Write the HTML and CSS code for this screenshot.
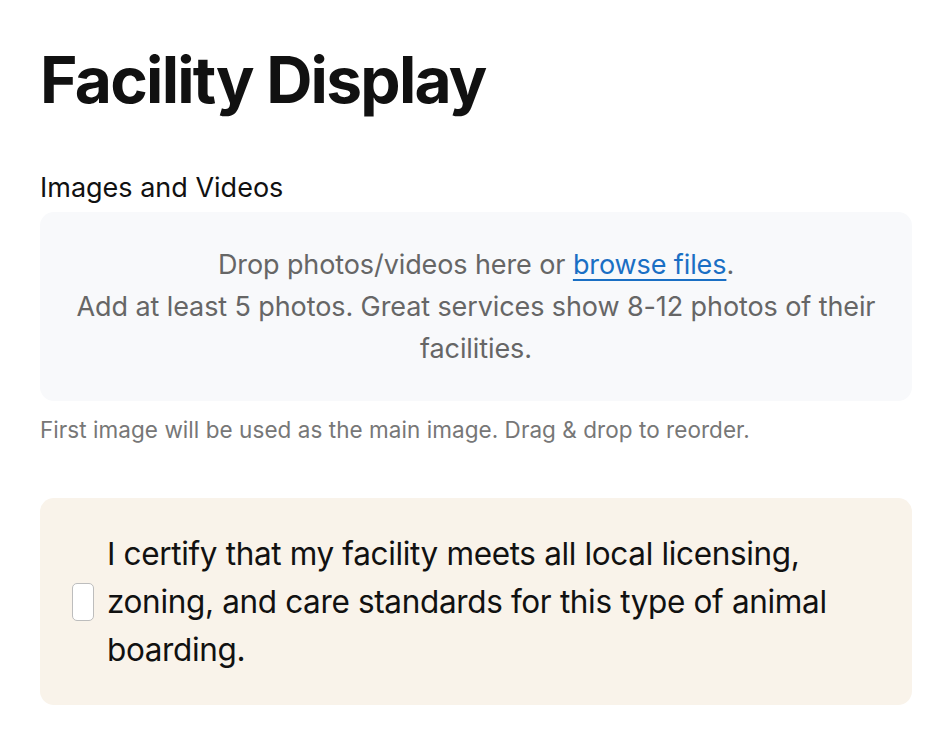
FILE: index.html
```html
<!DOCTYPE html>
<html lang="en">
<head>
<meta charset="utf-8">
<title>Facility Display</title>
<link rel="stylesheet" href="styles.css">
</head>
<body>
<main class="page">
  <h1 class="title">Facility Display</h1>
  <section class="field">
    <div class="label">Images and Videos</div>
    <div class="dropzone">
      <p>Drop photos/videos here or <a href="#" class="link">browse files</a>.</p>
      <p>Add at least 5 photos. Great services show 8-12 photos of their facilities.</p>
    </div>
    <div class="hint">First image will be used as the main image. Drag &amp; drop to reorder.</div>
  </section>
  <label class="certify">
    <span class="check"></span>
    <span class="certify-text">I certify that my facility meets all local licensing, zoning, and care standards for this type of animal boarding.</span>
  </label>
</main>
</body>
</html>
```

FILE: styles.css
```css
* { box-sizing: border-box; }
html, body { margin: 0; padding: 0; background: #fff; }
body {
  font-family: Inter, "Noto Sans", sans-serif;
  color: #111;
}
.page {
  padding: 40px 40px;
}
.title {
  margin: 0;
  font-size: 64px;
  font-weight: 700;
  line-height: 80px;
  letter-spacing: -1.75px;
  color: #111;
}
.field {
  margin-top: 52px;
}
.label {
  font-size: 27px;
  line-height: 32px;
  letter-spacing: 0;
  color: #111;
}
.dropzone {
  margin-top: 8px;
  background: #f8f9fb;
  border-radius: 14px;
  padding: 32px 32px 31px;
  text-align: center;
  color: #666;
  font-size: 27px;
  line-height: 42px;
  letter-spacing: -0.1px;
}
.dropzone p { margin: 0; }
.link {
  color: #1a6fc4;
  text-decoration: underline;
  text-underline-offset: 5px;
  text-decoration-thickness: 2px;
}
.hint {
  margin-top: 14px;
  font-size: 22.5px;
  line-height: 30px;
  color: #777;
  letter-spacing: 0.05px;
}
.certify {
  margin-top: 53px;
  display: flex;
  align-items: center;
  gap: 13px;
  background: #f9f3ea;
  border-radius: 14px;
  padding: 32px 32px 31px;
}
.check {
  flex: 0 0 auto;
  width: 22px;
  height: 38px;
  border: 1.5px solid #bdbdbd;
  border-radius: 5px;
  background: #fff;
}
.certify-text {
  font-size: 31.5px;
  line-height: 48px;
  color: #111;
  letter-spacing: -0.35px;
}
```
